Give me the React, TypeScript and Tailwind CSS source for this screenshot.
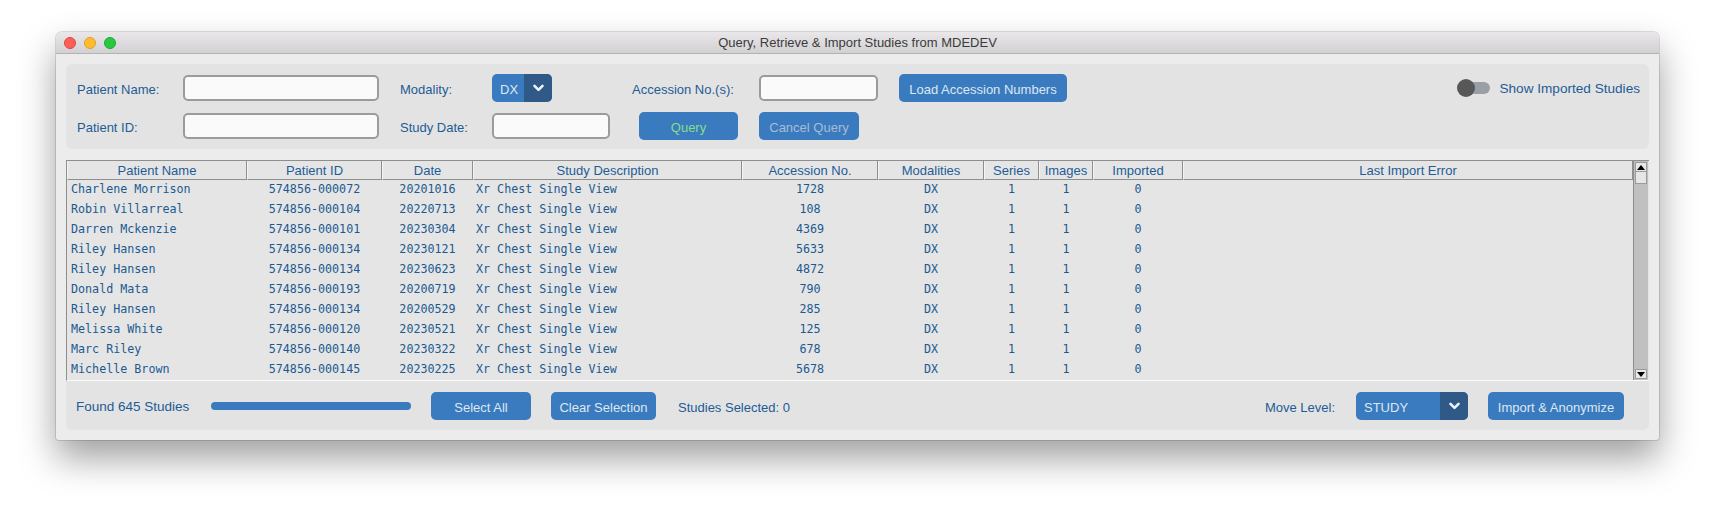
import React from 'react';

const COLUMNS = [
  { label: 'Patient Name', w: 'w-[180px]', align: 'text-left pl-[4px]' },
  { label: 'Patient ID', w: 'w-[135px]', align: 'text-center' },
  { label: 'Date', w: 'w-[91px]', align: 'text-center' },
  { label: 'Study Description', w: 'w-[269px]', align: 'text-left pl-[3px]' },
  { label: 'Accession No.', w: 'w-[136px]', align: 'text-center' },
  { label: 'Modalities', w: 'w-[106px]', align: 'text-center' },
  { label: 'Series', w: 'w-[55px]', align: 'text-center' },
  { label: 'Images', w: 'w-[54px]', align: 'text-center' },
  { label: 'Imported', w: 'w-[90px]', align: 'text-center' },
  { label: 'Last Import Error', w: 'w-[450px]', align: 'text-left' },
];

const STUDIES = [
  ['Charlene Morrison', '574856-000072', '20201016', '1728'],
  ['Robin Villarreal', '574856-000104', '20220713', '108'],
  ['Darren Mckenzie', '574856-000101', '20230304', '4369'],
  ['Riley Hansen', '574856-000134', '20230121', '5633'],
  ['Riley Hansen', '574856-000134', '20230623', '4872'],
  ['Donald Mata', '574856-000193', '20200719', '790'],
  ['Riley Hansen', '574856-000134', '20200529', '285'],
  ['Melissa White', '574856-000120', '20230521', '125'],
  ['Marc Riley', '574856-000140', '20230322', '678'],
  ['Michelle Brown', '574856-000145', '20230225', '5678'],
];

const SANS = "font-['Liberation_Sans',Arial,sans-serif]";
const MONO = "font-['DejaVu_Sans_Mono',monospace]";

// ── small widgets ──
const Label: React.FC<{ w: string; children: React.ReactNode }> = ({ w, children }) => (
  <div className={`${w} shrink-0 pt-[4px] text-[13px] text-[#1e5c96]`}>{children}</div>
);

const Field: React.FC<{ w: string }> = ({ w }) => (
  <div className={`${w} h-[26px] shrink-0 rounded-[5px] border-2 border-[#9b9b9b] bg-[#fafafa]`} />
);

const Btn: React.FC<{ w: string; text?: string; children: React.ReactNode }> = ({ w, text, children }) => (
  <div
    className={`${w} h-[28px] shrink-0 pt-[3px] rounded-[5px] bg-[#3a7bbf] flex items-center justify-center text-[13px] ${text || 'text-[#dde7f1]'}`}
  >
    {children}
  </div>
);

const Chevron = () => (
  <svg width="11" height="8" viewBox="0 0 11 8">
    <path d="M1.5 1.8 L5.5 5.8 L9.5 1.8" fill="none" stroke="#eef3f8" strokeWidth="2.6" strokeLinecap="round" strokeLinejoin="round" />
  </svg>
);

const Combo: React.FC<{ w: string; value: string }> = ({ w, value }) => (
  <div className={`${w} h-[28px] shrink-0 rounded-[5px] bg-[#3a7bbf] flex overflow-hidden`}>
    <div className="flex-1 flex items-center pl-[8px] pt-[3px] text-[13px] text-[#dde7f1]">{value}</div>
    <div className="w-[28px] bg-[#2f5a88] flex items-center justify-center">
      <Chevron />
    </div>
  </div>
);

const Arrow: React.FC<{ up?: boolean }> = ({ up }) => (
  <div className="h-[10px] mx-[1px] bg-[#e8e8e8] border border-[#9a9a9a] flex items-center justify-center">
    <svg width="8" height="5" viewBox="0 0 8 5">
      <path d={up ? 'M0 5 L4 0 L8 5 Z' : 'M0 0 L4 5 L8 0 Z'} fill="#000" />
    </svg>
  </div>
);

export default function App() {
  return (
    <div className={`min-h-[518px] w-[1715px] bg-white pt-[32px] pl-[56px] ${SANS}`}>
      <div className="w-[1603px] rounded-t-[6px] rounded-b-[3px] bg-[#ececec] shadow-[0_0_0_1px_rgba(0,0,0,0.12),0_18px_36px_rgba(0,0,0,0.38)] overflow-hidden">
        {/* title bar */}
        <div className="h-[22px] relative bg-gradient-to-b from-[#e9e7e9] to-[#d2d0d2] border-b border-[#b3b3b3] flex items-center justify-center">
          <div className="absolute left-[8px] top-[5px] flex gap-[8px]">
            <div className="w-[12px] h-[12px] rounded-full bg-[#fd5f57] border border-[#e0443e]" />
            <div className="w-[12px] h-[12px] rounded-full bg-[#febc2e] border border-[#dea123]" />
            <div className="w-[12px] h-[12px] rounded-full bg-[#28c840] border border-[#1aab29]" />
          </div>
          <span className="pt-[1px] text-[13px] text-[#3b3b3b]">Query, Retrieve &amp; Import Studies from MDEDEV</span>
        </div>

        <div className="px-[10px] pt-[10px] pb-[10px]">
          {/* query panel */}
          <div className="h-[85px] rounded-[6px] bg-[#e3e3e3] pl-[11px] pr-[9px] pt-[10px] flex flex-col gap-[10px]">
            <div className="flex items-center h-[28px]">
              <Label w="w-[106px]">Patient Name:</Label>
              <Field w="w-[196px]" />
              <div className="w-[21px] shrink-0" />
              <Label w="w-[92px]">Modality:</Label>
              <div className="w-[140px] shrink-0">
                <Combo w="w-[60px]" value="DX" />
              </div>
              <Label w="w-[127px]">Accession No.(s):</Label>
              <Field w="w-[119px]" />
              <div className="w-[21px] shrink-0" />
              <Btn w="w-[168px]">Load Accession Numbers</Btn>
              <div className="flex-1" />
              <div className="flex items-center">
                <div className="relative w-[33px] h-[18px] flex items-center">
                  <div className="absolute left-[6px] right-0 h-[12px] rounded-full bg-[#9a9fa5]" />
                  <div className="relative w-[18px] h-[18px] rounded-full bg-[#585858]" />
                </div>
                <span className="ml-[9px] pt-[3px] text-[13.6px] text-[#1e5c96]">Show Imported Studies</span>
              </div>
            </div>
            <div className="flex items-center h-[28px]">
              <Label w="w-[106px]">Patient ID:</Label>
              <Field w="w-[196px]" />
              <div className="w-[21px] shrink-0" />
              <Label w="w-[92px]">Study Date:</Label>
              <div className="w-[147px] shrink-0">
                <Field w="w-[118px]" />
              </div>
              <Btn w="w-[99px]" text="text-[#86dd8a]">Query</Btn>
              <div className="w-[21px] shrink-0" />
              <Btn w="w-[100px]" text="text-[#a8bdd3]">Cancel Query</Btn>
            </div>
          </div>

          {/* results panel */}
          <div className="mt-[11px] rounded-b-[6px] bg-[#e3e3e3] pb-[10px]">
            <div className="flex border-t border-[#8e8e8e] border-l border-[#8e8e8e] border-b border-b-[#fbfbfb] bg-[#e5e5e5]">
              <div className="w-[1566px]">
                <div className="flex h-[19px]">
                  {COLUMNS.map(c => (
                    <div
                      key={c.label}
                      className={`${c.w} shrink-0 pt-[1px] border-b border-r border-[#8e8e8e] border-l border-l-[#f4f4f4] flex items-center justify-center text-[13px] leading-none text-[#1e5c96]`}
                    >
                      {c.label}
                    </div>
                  ))}
                </div>
                {STUDIES.map((s, i) => {
                  const cells = [s[0], s[1], s[2], 'Xr Chest Single View', s[3], 'DX', '1', '1', '0', ''];
                  return (
                    <div key={i} className="flex h-[20px] items-center">
                      {COLUMNS.map((c, j) => (
                        <div
                          key={j}
                          className={`${c.w} ${c.align} shrink-0 ${MONO} text-[11.7px] leading-none text-[#1b5a91] whitespace-pre`}
                        >
                          {cells[j]}
                        </div>
                      ))}
                    </div>
                  );
                })}
              </div>
              {/* scrollbar */}
              <div className="w-[15px] border-l border-[#8e8e8e] bg-[#c0c0c0] flex flex-col pt-[1px] pb-[1px]">
                <Arrow up />
                <div className="h-[12px] mx-[1px] bg-[#e6e6e6] border border-[#9a9a9a] border-t-0" />
                <div className="flex-1" />
                <Arrow />
              </div>
            </div>

            {/* bottom bar */}
            <div className="flex items-center h-[28px] mt-[11px] pl-[10px] pr-[25px]">
              <span className="w-[135px] shrink-0 pt-[3px] text-[13.5px] text-[#1e5c96]">Found 645 Studies</span>
              <div className="w-[200px] h-[8px] shrink-0 rounded-full bg-[#3a7bbf]" />
              <div className="w-[20px] shrink-0" />
              <Btn w="w-[100px]">Select All</Btn>
              <div className="w-[20px] shrink-0" />
              <Btn w="w-[105px]">Clear Selection</Btn>
              <span className="ml-[22px] pt-[3px] text-[13px] text-[#1e5c96]">Studies Selected: 0</span>
              <div className="flex-1" />
              <span className="pt-[3px] text-[13px] text-[#1e5c96]">Move Level:</span>
              <div className="w-[21px] shrink-0" />
              <Combo w="w-[112px]" value="STUDY" />
              <div className="w-[20px] shrink-0" />
              <Btn w="w-[136px]">Import &amp; Anonymize</Btn>
            </div>
          </div>
        </div>
      </div>
    </div>
  );
}
